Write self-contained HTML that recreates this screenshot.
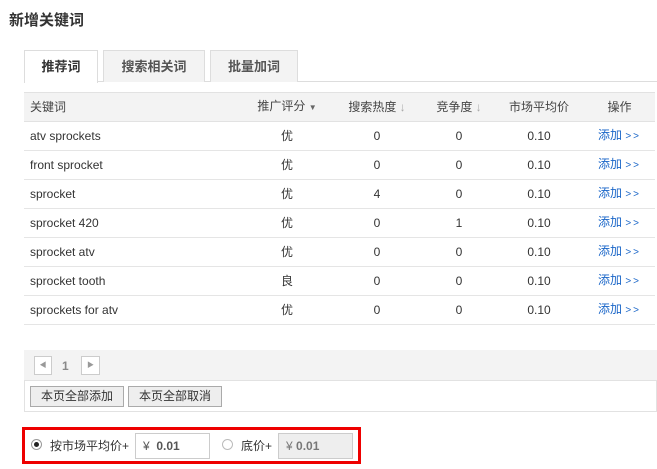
<!DOCTYPE html><html><head><meta charset="utf-8"><style>
*{box-sizing:border-box;margin:0;padding:0}
body{width:657px;height:469px;background:#fff;font-family:"Liberation Sans","Noto Sans CJK SC",sans-serif;font-size:12px;color:#333;position:relative;overflow:hidden}
.a{position:absolute}
.title{left:9px;top:9px;font-size:15px;font-weight:bold;color:#333}
.tab{top:50px;height:32px;border:1px solid #ddd;border-bottom:none;background:#f3f3f3;font-size:13px;font-weight:bold;color:#555;text-align:center;line-height:31px}
table{position:absolute;left:24px;top:92px;width:631px;border-collapse:collapse}
td,th{height:29px;line-height:14px;vertical-align:middle;border-bottom:1px solid #e5e5e5;font-weight:normal;text-align:center;font-size:12px}
th{background:#f3f3f3;color:#444;border-top:1px solid #e2e2e2;border-bottom:1px solid #e2e2e2}
td:first-child,th:first-child{text-align:left;padding-left:6px}
.l{color:#1a66c8}
.l span{font-size:10px;letter-spacing:2px}
.btn{top:386px;height:21px;border:1px solid #aaa;background:#eee;font-size:12px;line-height:19px;text-align:center}
.inp{top:433px;width:75px;height:26px;border:1px solid #ccc;font-size:12px;line-height:24px;padding-left:7px;font-weight:bold;color:#555}
.rad{width:11px;height:11px;border:1px solid #999;border-radius:50%;top:439px}
</style></head><body>
<div class="a title">新增关键词</div>
<div class="a" style="left:24px;top:81px;width:633px;height:1px;background:#ddd"></div>
<div class="a tab" style="left:24px;width:74px;background:#fff;height:33px;color:#333">推荐词</div>
<div class="a tab" style="left:103px;width:102px">搜索相关词</div>
<div class="a tab" style="left:210px;width:88px">批量加词</div>
<table>
<tr><th style="width:220px">关键词</th><th style="width:86px">推广评分 <span style="font-size:8px;color:#666">▼</span></th><th style="width:94px">搜索热度 <span style="color:#aaa">↓</span></th><th style="width:70px">竞争度 <span style="color:#aaa">↓</span></th><th style="width:90px">市场平均价</th><th>操作</th></tr>
<tr><td>atv sprockets</td><td>优</td><td>0</td><td>0</td><td>0.10</td><td class="l">添加 <span>&gt;&gt;</span></td></tr>
<tr><td>front sprocket</td><td>优</td><td>0</td><td>0</td><td>0.10</td><td class="l">添加 <span>&gt;&gt;</span></td></tr>
<tr><td>sprocket</td><td>优</td><td>4</td><td>0</td><td>0.10</td><td class="l">添加 <span>&gt;&gt;</span></td></tr>
<tr><td>sprocket 420</td><td>优</td><td>0</td><td>1</td><td>0.10</td><td class="l">添加 <span>&gt;&gt;</span></td></tr>
<tr><td>sprocket atv</td><td>优</td><td>0</td><td>0</td><td>0.10</td><td class="l">添加 <span>&gt;&gt;</span></td></tr>
<tr><td>sprocket tooth</td><td>良</td><td>0</td><td>0</td><td>0.10</td><td class="l">添加 <span>&gt;&gt;</span></td></tr>
<tr><td>sprockets for atv</td><td>优</td><td>0</td><td>0</td><td>0.10</td><td class="l">添加 <span>&gt;&gt;</span></td></tr>
</table>
<div class="a" style="left:24px;top:350px;width:633px;height:62px;border:1px solid #e2e2e2;border-top:none;background:#fff"></div>
<div class="a" style="left:24px;top:350px;width:633px;height:31px;background:#f3f3f3;border-bottom:1px solid #e2e2e2"></div>
<div class="a" style="left:34px;top:356px;width:18px;height:19px;border:1px solid #ccc;background:#fff;font-size:7px;color:#999;text-align:center;line-height:17px">◀</div>
<div class="a" style="left:62px;top:359px;font-weight:bold;color:#888">1</div>
<div class="a" style="left:81px;top:356px;width:19px;height:19px;border:1px solid #ccc;background:#fff;font-size:7px;color:#999;text-align:center;line-height:17px">▶</div>
<div class="a btn" style="left:30px;width:94px">本页全部添加</div>
<div class="a btn" style="left:128px;width:94px">本页全部取消</div>
<div class="a" style="left:22px;top:427px;width:339px;height:37px;border:3px solid #e00"></div>
<div class="a rad" style="left:31px"><div style="width:5px;height:5px;background:#222;border-radius:50%;margin:2px"></div></div>
<div class="a" style="left:50px;top:437px;font-size:12px">按市场平均价+</div>
<div class="a inp" style="left:135px"><span style="font-weight:normal">¥</span>&nbsp; 0.01</div>
<div class="a rad" style="left:222px;border-color:#bbb"></div>
<div class="a" style="left:241px;top:437px;font-size:12px">底价+</div>
<div class="a inp" style="left:278px;background:#eee;color:#777"><span style="font-weight:normal">¥</span> 0.01</div>
</body></html>
